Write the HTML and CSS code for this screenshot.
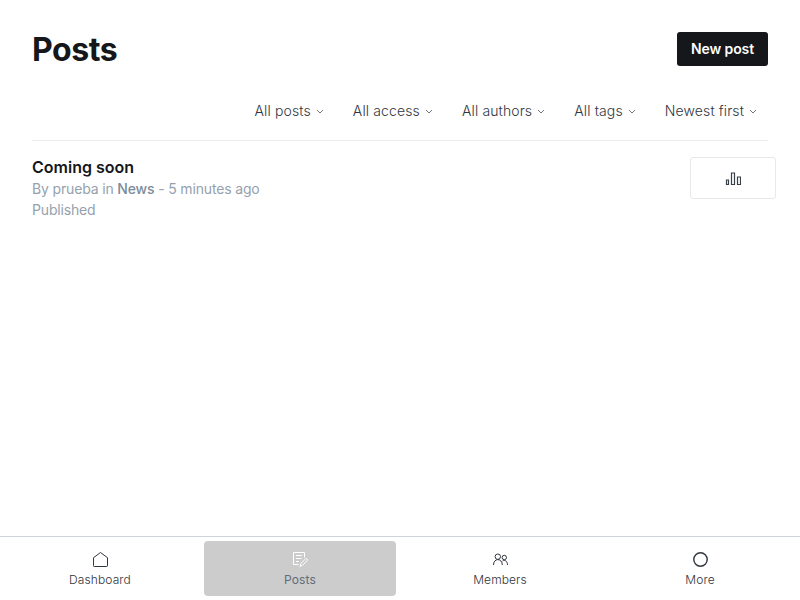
FILE: index.html
```html
<!DOCTYPE html>
<html lang="en">
<head>
<meta charset="utf-8">
<title>Posts</title>
<link rel="stylesheet" href="styles.css">
</head>
<body>
<main class="content">
  <header class="header">
    <h1 class="title">Posts</h1>
    <button class="new-post">New post</button>
  </header>
  <nav class="filters">
    <span class="filter">All posts<svg viewBox="0 0 8 6"><path d="M1 1l3 3 3-3"/></svg></span>
    <span class="filter">All access<svg viewBox="0 0 8 6"><path d="M1 1l3 3 3-3"/></svg></span>
    <span class="filter">All authors<svg viewBox="0 0 8 6"><path d="M1 1l3 3 3-3"/></svg></span>
    <span class="filter">All tags<svg viewBox="0 0 8 6"><path d="M1 1l3 3 3-3"/></svg></span>
    <span class="filter">Newest first<svg viewBox="0 0 8 6"><path d="M1 1l3 3 3-3"/></svg></span>
  </nav>
  <article class="post">
    <div class="post-text">
      <h2 class="post-title">Coming soon</h2>
      <p class="meta">By prueba in <b>News</b> - 5 minutes ago</p>
      <p class="meta">Published</p>
    </div>
    <a class="stats"><svg viewBox="0 0 16 14"><path d="M1.500 8h2v4.500h-2zM6.500 1h3v11.500h-3zM12.500 5h3v7.500h-3z"/></svg></a>
  </article>
</main>
<nav class="tabs">
  <a class="tab"><svg viewBox="0 0 15 15"><path d="M.5 5.700l7-5.200 7 5.200v8.100q0 .7-.7.700H1.200q-.7 0-.7-.7z"/></svg><span>Dashboard</span></a>
  <a class="tab active"><svg viewBox="0 0 15 15"><path d="M5.500 12.500h-5V.5h11v5M3 3.500h6M3 6.500h5.500M3 9.500h3M7 14.500l.7-2.800 4.700-4.700q.9-.9 1.700 0t0 1.700l-4.700 4.700z"/></svg><span>Posts</span></a>
  <a class="tab"><svg viewBox="0 0 15 15"><circle cx="4.800" cy="4.700" r="2.700"/><circle cx="11.300" cy="5.500" r="2.200"/><path d="M.5 13c0-7.200 8.800-7.200 8.800 0M9.500 9c2.200-1.600 5 0 5 4"/></svg><span>Members</span></a>
  <a class="tab more"><svg viewBox="0 0 15 15"><circle cx="7.500" cy="7.500" r="6.700"/></svg><span>More</span></a>
</nav>
</body>
</html>
```
FILE: styles.css
```css
* { box-sizing: border-box; }
body { margin: 0; height: 600px; display: flex; flex-direction: column; font-family: Inter, sans-serif; color: #15171a; background: #fff; overflow: hidden; }
h1, h2, p { margin: 0; }
svg { fill: none; stroke: currentColor; }
.content { flex: 1; padding: 32px 32px 0; }
.header { display: flex; justify-content: space-between; height: 34px; align-items: center; }
.title { font-size: 32px; font-weight: 700; line-height: 36px; letter-spacing: -.45px; padding-top: 2px; }
.new-post { width: 91px; height: 34px; padding: 0 0 1px; border: 0; border-radius: 3px; background: #15171a; color: #fff; font: 600 14px Inter, sans-serif; letter-spacing: -.1px; }
.filters { display: flex; align-items: flex-start; justify-content: flex-end; gap: 29px; height: 75px; padding: 35px 11px 0 0; border-bottom: 1px solid #e9ebed; font-size: 14px; font-weight: 300; line-height: 20px; letter-spacing: .13px; color: #30363d; }
.filter { display: flex; align-items: center; }
.filter svg { width: 8px; height: 6px; margin: 1px 0 0 5px; color: #70767e; }
.post { display: flex; justify-content: space-between; padding-top: 16px; margin-right: -8px; }
.post-title { font-size: 16px; font-weight: 600; line-height: 21px; }
.meta { font-size: 14px; line-height: 21px; letter-spacing: -.16px; color: #95a1ad; }
.meta b { font-weight: 500; color: #7c8b9a; }
.stats { width: 86px; height: 42px; border: 1px solid #e6e9eb; border-radius: 3px; display: flex; align-items: center; justify-content: center; }
.stats svg { width: 16px; height: 14px; margin-top: 1px; color: #394047; stroke-width: 1.2; }
.tabs { height: 64px; border-top: 1px solid #ced4d9; display: grid; grid-template-columns: repeat(4, 1fr); gap: 8px; padding: 4px; }
.tab { display: flex; flex-direction: column; align-items: center; padding-top: 11px; height: 55px; border-radius: 4px; font-size: 12px; line-height: 16px; color: #30363d; }
.tab span { font-weight: 300; letter-spacing: .1px; }
.tab svg { width: 15px; height: 15px; margin: 0 0 5px 1px; }
.active { background: #ccc; color: #626d79; }
.active span { font-weight: 400; }
.active svg { color: #fff; }
.more svg { stroke-width: 1.4; }
```
